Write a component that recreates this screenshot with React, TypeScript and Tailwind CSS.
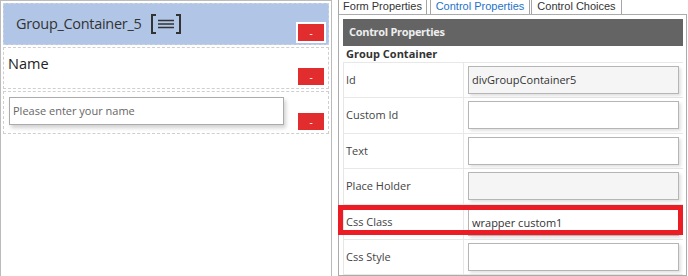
const ui = "font-['Open_Sans',sans-serif]";
const arial = "font-['Liberation_Sans',Arial,sans-serif]";

const RemoveButton = () => (
  <div className="absolute right-[2px] bottom-[1px] flex h-[21px] w-[30px] items-center justify-center border-2 border-white bg-[#e22d2f] text-[10px] leading-none text-white">
    -
  </div>
);

const MenuIcon = () => (
  <svg width="32" height="20" viewBox="0 0 32 20" fill="none" stroke="#333" strokeWidth="2">
    <path d="M6 1H2v18h4" />
    <path d="M26 1h4v18h-4" />
    <path d="M8 6.5h16M8 10h16M8 13.5h16" strokeWidth="1.6" />
  </svg>
);

const rows = [
  { label: "Id", value: "divGroupContainer5", readOnly: true },
  { label: "Custom Id", value: "" },
  { label: "Text", value: "" },
  { label: "Place Holder", value: "", readOnly: true },
  { label: "Css Class", value: "wrapper custom1", highlight: true },
  { label: "Css Style", value: "" },
];

const App = () => {
  return (
    <div className={`flex h-[276px] w-[688px] overflow-hidden bg-white ${ui}`}>
      {/* form canvas */}
      <div className="flex h-[280px] w-[332px] flex-col gap-[2px] border border-[#bbbbbb] px-[2px] pt-[2px]">
        <div className="relative flex h-[42px] items-center border border-dashed border-[#c9d3e3] bg-[#b1c6e7] pl-[12px]">
          <span className="text-[14.5px] tracking-[-0.3px] text-[#333]">Group_Container_5</span>
          <span className="ml-[9px] mt-[-1px]">
            <MenuIcon />
          </span>
          <RemoveButton />
        </div>
        <div className="relative h-[42px] border border-dashed border-[#cfcfcf] pl-[4px] pt-[3px]">
          <span className="text-[14.5px] text-[#222]">Name</span>
          <RemoveButton />
        </div>
        <div className="relative h-[43px] border border-dashed border-[#cfcfcf] pl-[5px] pt-[5px]">
          <div className="flex h-[28px] w-[275px] items-center border border-[#ababab] bg-white pl-[3px] text-[11px] text-[#666] shadow-[2px_3px_4px_rgba(0,0,0,0.18)]">
            Please enter your name
          </div>
          <RemoveButton />
        </div>
      </div>

      {/* properties */}
      <div className="ml-[6px] flex w-[349px] flex-col">
        <div className={`flex h-[14px] items-end text-[11px] leading-none ${arial}`}>
          <div className="flex h-[15px] w-[89px] items-center justify-center border-x border-[#a6a6a6] text-[#333]">
            Form Properties
          </div>
          <div className="ml-[3px] flex h-[15px] w-[100px] items-center justify-center border-x border-[#a6a6a6] text-[#1e73c8]">
            Control Properties
          </div>
          <div className="ml-[1px] flex h-[15px] w-[91px] items-center justify-center border-x border-[#a6a6a6] text-[#333]">
            Control Choices
          </div>
        </div>
        <div className="h-[270px] border border-[#ababab] pl-[4px] pr-[3px] pt-[4px]">
          <div className="flex h-[27px] items-center bg-[#646464] pl-[6px] text-[11px] font-bold tracking-[-0.3px] text-[#eeeeee]">
            Control Properties
          </div>
          <div className="flex h-[17px] items-center border-b border-[#e8e8e8] pl-[3px] text-[11px] font-bold text-[#333]">
            Group Container
          </div>
          <div className="border-l border-[#e6e6e6]">
            {rows.map((r) => (
              <div key={r.label} className="relative flex h-[35.4px] border-b border-[#e8e8e8]">
                <div className="flex w-[120px] items-center border-r border-[#e8e8e8] pl-[2px] text-[11px] text-[#444]">
                  {r.label}
                </div>
                <div className="flex flex-1 pl-[4px] pr-[4px] pt-[3px]">
                  <div
                    className={`flex h-[28px] w-full items-center border border-[#b5b5b5] pl-[3px] text-[11px] text-[#333] shadow-[2px_2px_3px_rgba(0,0,0,0.12)] ${
                      r.readOnly ? "bg-[#f5f5f5]" : "bg-white"
                    } ${r.highlight ? "pt-[4px]" : ""}`}
                  >
                    {r.value}
                  </div>
                </div>
                {r.highlight && (
                  <div className="absolute left-[-6px] right-[0px] top-[0px] h-[30px] border-[5px] border-[#ec1c24]" />
                )}
              </div>
            ))}
          </div>
        </div>
      </div>
    </div>
  );
};

export default App;
